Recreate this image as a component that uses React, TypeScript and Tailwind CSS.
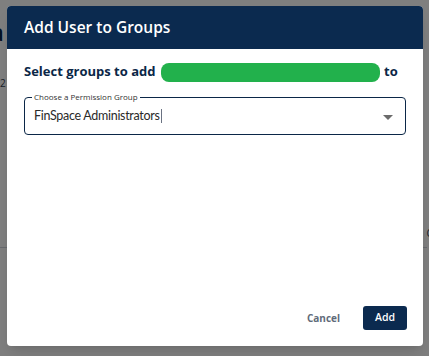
export default function App() {
  return (
    <div className="relative w-[429px] h-[356px] overflow-hidden bg-white font-['Open_Sans',sans-serif]">
      {/* page behind the modal */}
      <div className="pt-[20px] -ml-[10px]">
        <h1 className="text-[24px] font-semibold text-[#0b2747] leading-none">a</h1>
        <p className="mt-[32px] ml-[10px] text-[10px] text-gray-700">2</p>
      </div>
      <div className="mt-[128px] flex items-center">
        <div className="flex-1 border-b border-gray-300 mt-[28px]" />
        <span className="-mr-[8px] text-[10px] text-gray-700">Cr</span>
      </div>

      {/* overlay */}
      <div className="absolute inset-0 bg-black/50" />

      {/* dialog */}
      <div className="absolute left-[7px] top-[6px] w-[416px] h-[340px] bg-white rounded-[4px] overflow-hidden flex flex-col shadow-lg">
        <div className="h-[43px] bg-[#0b2a4f] flex items-center px-[17px]">
          <h2 className="text-white text-[15.5px] font-semibold whitespace-nowrap">Add User to Groups</h2>
        </div>
        <div className="flex-1 px-[17px] pt-[13px]">
          <p className="flex items-center text-[13px] font-bold text-[#0b2747] whitespace-nowrap h-[20px]">
            <span className="w-[137px] inline-block">Select groups to add</span>
            <span className="inline-block w-[219px] h-[19px] rounded-[8px] bg-[#22b14c]" />
            <span className="ml-[4px] inline-block">to</span>
          </p>
          <div className="relative mt-[15px] w-[382px] h-[38px] border border-[#0b2747] rounded-[4px] flex items-center pl-[9px] pr-[12px]">
            <span className="absolute -top-[6px] left-[7px] bg-white px-[2px] text-[8px] leading-[10px] text-[#333]">
              Choose a Permission Group
            </span>
            <span className="flex-1 text-[12.5px] tracking-[-0.3px] text-[#2a2a2a] font-['Lato',sans-serif] flex items-center">
              FinSpace Administrators
              <span className="inline-block w-px h-[14px] bg-gray-500 ml-px" />
            </span>
            <svg width="10" height="5" viewBox="0 0 10 5" className="mt-[2px]">
              <path d="M0 0 L10 0 L5 5 Z" fill="#6b6b6b" />
            </svg>
          </div>
        </div>
        <div className="flex items-center justify-end gap-[23px] px-[16px] pb-[16px]">
          <button className="text-[10px] font-bold text-[#5f6b7a]">Cancel</button>
          <button className="w-[44px] h-[24px] rounded-[3px] bg-[#0b2a4f] text-white text-[10.5px] font-semibold">
            Add
          </button>
        </div>
      </div>
    </div>
  );
}
